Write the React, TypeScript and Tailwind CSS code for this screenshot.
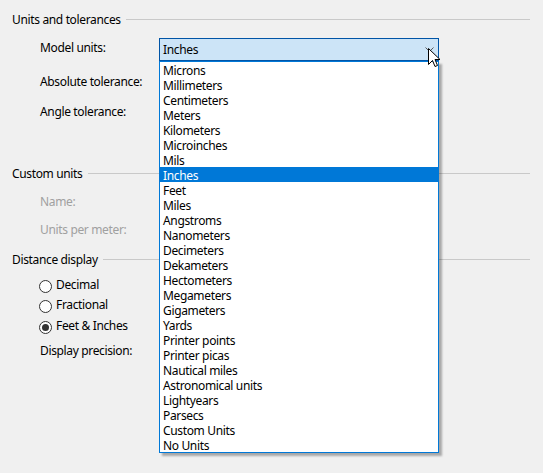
import React from "react";

const units = [
  "Microns",
  "Millimeters",
  "Centimeters",
  "Meters",
  "Kilometers",
  "Microinches",
  "Mils",
  "Inches",
  "Feet",
  "Miles",
  "Angstroms",
  "Nanometers",
  "Decimeters",
  "Dekameters",
  "Hectometers",
  "Megameters",
  "Gigameters",
  "Yards",
  "Printer points",
  "Printer picas",
  "Nautical miles",
  "Astronomical units",
  "Lightyears",
  "Parsecs",
  "Custom Units",
  "No Units",
];

const GroupHeader = ({ title, className = "" }: { title: string; className?: string }) => (
  <div className={`flex h-[16px] items-start pl-[12px] pr-[13px] ${className}`}>
    <span className="leading-[16px] whitespace-nowrap">{title}</span>
    <div className="ml-[5px] mt-[7px] h-px flex-1 bg-[#c9c9c9]" />
  </div>
);

const Radio = ({ label, checked, className = "" }: { label: string; checked?: boolean; className?: string }) => (
  <div className={`flex h-[16px] items-center pl-[39px] ${className}`}>
    <span className="mt-[2px] flex h-[13px] w-[13px] items-center justify-center rounded-full border border-[#333333] bg-white">
      {checked && <span className="h-[7px] w-[7px] rounded-full bg-[#333333]" />}
    </span>
    <span className="ml-[4px] leading-[16px]">{label}</span>
  </div>
);

export default function App() {
  return (
    <div
      className="relative h-[473px] w-[543px] overflow-hidden bg-[#f0f0f0] pt-[12px] text-[12px] tracking-[-0.35px] text-black"
      style={{ fontFamily: '"Segoe UI", "Noto Sans", sans-serif' }}
    >
      <GroupHeader title="Units and tolerances" />

      <div className="mt-[10px] flex h-[23px] items-start">
        <span className="w-[159px] pl-[40px] pt-[2px] leading-[16px]">Model units:</span>
        <div className="relative flex h-[23px] w-[280px] items-center border border-[#0054a6] bg-[#cce4f7] pl-[3px]">
          <span className="leading-[16px]">Inches</span>
          <svg className="absolute right-[4px] top-[8px]" width="9" height="6" viewBox="0 0 9 6">
            <path d="M0.5 0.5 L4.5 4.5 L8.5 0.5" fill="none" stroke="#5a5a5a" strokeWidth="1" />
          </svg>
        </div>
      </div>

      <div className="mt-[13px] h-[16px] pl-[40px] leading-[16px]">Absolute tolerance:</div>
      <div className="mt-[14px] h-[16px] pl-[40px] leading-[16px]">Angle tolerance:</div>

      <GroupHeader title="Custom units" className="mt-[46px]" />
      <div className="mt-[12px] h-[16px] pl-[40px] leading-[16px] text-[#a0a0a0]">Name:</div>
      <div className="mt-[12px] h-[16px] pl-[40px] leading-[16px] text-[#a0a0a0]">Units per meter:</div>

      <GroupHeader title="Distance display" className="mt-[14px]" />
      <Radio label="Decimal" className="mt-[9px]" />
      <Radio label="Fractional" className="mt-[4px]" />
      <Radio label="Feet & Inches" checked className="mt-[5px]" />
      <div className="mt-[9px] h-[16px] pl-[40px] leading-[16px]">Display precision:</div>

      {/* open dropdown list */}
      <div className="absolute left-[159px] top-[61px] w-[280px] border border-[#0078d7] bg-white shadow-[3px_3px_2px_rgba(0,0,0,0.3)]">
        {units.map((u) => (
          <div
            key={u}
            className={`h-[15px] whitespace-nowrap pl-[3px] leading-[15px] ${
              u === "Inches" ? "bg-[#0078d7] text-white" : ""
            }`}
          >
            <span className="relative top-[1px]">{u}</span>
          </div>
        ))}
      </div>

      {/* mouse cursor */}
      <svg className="absolute left-[428px] top-[48px]" width="13" height="21" viewBox="0 0 13 21">
        <path
          d="M0.5 0.5 L0.5 16.5 L4.5 12.5 L7 18.5 L9.5 17.5 L7 11.5 L12 11.5 Z"
          fill="white"
          stroke="black"
          strokeWidth="1"
          strokeLinejoin="miter"
        />
      </svg>
    </div>
  );
}
